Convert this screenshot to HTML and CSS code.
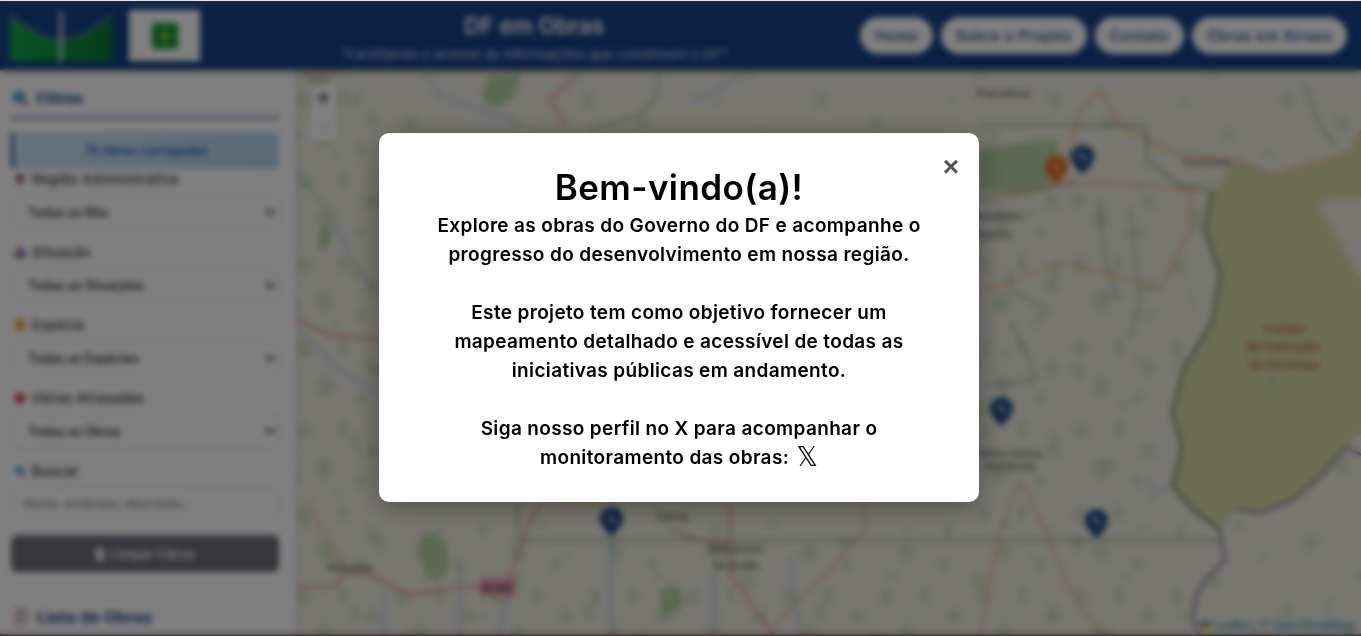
FILE: index.html
```html
<!DOCTYPE html>
<html lang="pt-BR">
<head>
<meta charset="utf-8">
<title>DF em Obras</title>
<link rel="stylesheet" href="styles.css">
</head>
<body>
<div class="page">
  <header class="topbar">
    <div class="logos">
      <svg class="logo-unb" viewBox="0 0 102 50"><defs><linearGradient id="unbg" x1="0" x2="1" y1="0" y2="0"><stop offset="0" stop-color="#12a848"/><stop offset="1" stop-color="#087a2c"/></linearGradient></defs><path d="M0 5 C22 22 36 30 51 30 C66 30 80 22 102 5 V50 H0Z" fill="url(#unbg)"/><rect x="49" y="0" width="4" height="50" fill="#fff" opacity=".7"/><path d="M0 3 C22 21 36 29 51 29 C66 29 80 21 102 3" fill="none" stroke="#fff" stroke-width="1.5" opacity=".45"/></svg>
      <div class="logo-box"><svg class="logo-df" viewBox="0 0 26 26"><rect width="26" height="26" rx="2" fill="#0c9a30"/><path d="M13 4 L15 11 L22 13 L15 15 L13 22 L11 15 L4 13 L11 11Z" fill="#b8c040"/></svg></div>
    </div>
    <div class="brand">
      <h1 class="brand-title">DF em Obras</h1>
      <p class="brand-sub">"Facilitando o acesso às informações que constroem o DF"</p>
    </div>
    <nav class="nav">
      <a class="nav-btn">Home</a>
      <a class="nav-btn">Sobre o Projeto</a>
      <a class="nav-btn">Contato</a>
      <a class="nav-btn">Obras em Atraso</a>
    </nav>
  </header>

  <main class="content">
    <aside class="sidebar">
      <h2 class="side-title"><svg class="ico-lg" viewBox="0 0 16 16"><circle cx="6.500" cy="6.500" r="5" fill="#5bb8e8" stroke="#3a7aa0" stroke-width="1.5"/><path d="M10 10 L15 15" stroke="#b04060" stroke-width="2.4"/></svg>Filtros</h2>
      <div class="info">74 obras carregadas</div>

      <label class="field-label"><svg class="ico" viewBox="0 0 12 12"><path d="M6 1 C8.500 1 10 2.500 10 5 C10 8 6 12 6 12 C6 12 2 8 2 5 C2 2.500 3.500 1 6 1Z" fill="#8a4a62"/></svg>Região Administrativa</label>
      <select class="control"><option>Todas as RAs</option></select>

      <label class="field-label"><svg class="ico" viewBox="0 0 12 12"><rect x="0" y="6" width="3.500" height="6" fill="#4caf50"/><rect x="4" y="0" width="3.500" height="12" fill="#c0508a"/><rect x="8" y="4" width="3.500" height="8" fill="#3a6fd0"/></svg>Situação</label>
      <select class="control"><option>Todas as Situações</option></select>

      <label class="field-label"><svg class="ico" viewBox="0 0 12 12"><rect x="1" y="0" width="10" height="12" fill="#f0c050"/><path d="M3 4 H9 M3 7 H9" stroke="#e06030" stroke-width="1.6"/></svg>Espécie</label>
      <select class="control"><option>Todas as Espécies</option></select>

      <label class="field-label"><svg class="ico" viewBox="0 0 12 12"><circle cx="6" cy="6" r="5.500" fill="#e04060"/></svg>Obras Atrasadas</label>
      <select class="control"><option>Todas as Obras</option></select>

      <label class="field-label"><svg class="ico" viewBox="0 0 12 12"><circle cx="5" cy="5" r="4" fill="#3aa0e0"/><path d="M8 8 L12 12" stroke="#404a90" stroke-width="2"/></svg>Buscar</label>
      <input class="control control-text" type="text" placeholder="Nome, endereço, descrição...">

      <button class="clear-btn"><svg class="ico-trash" viewBox="0 0 10 14"><path d="M0 2 H10 M3 2 V0 H7 V2 M1 3 V14 H9 V3" fill="#ddd" stroke="#eee"/></svg>Limpar Filtros</button>
      <hr class="side-rule">
      <h2 class="side-title side-title-list"><svg class="ico-lg" viewBox="0 0 16 18"><rect x="1" y="2" width="14" height="16" rx="1" fill="#f4e4d8" stroke="#d09080"/><rect x="4" y="0" width="8" height="4" fill="#a0a0b0"/><path d="M4 8 H12 M4 11 H12 M4 14 H12" stroke="#8a90c0"/></svg>Lista de Obras</h2>
    </aside>

    <section class="map">
      <svg class="tiles" viewBox="295 70 1066 564" preserveAspectRatio="none">
        <defs>
          <pattern id="woods" width="233" height="171" patternUnits="userSpaceOnUse">
            <path d="M12 14 q7-5 9 2 q1 9-6 8 q-6-2-3-10Z M70 8 q8-3 9 4 q-1 6-7 4 q-6-3-2-8Z M40 62 q12-5 16 4 q0 14-10 10 q-9-4-6-14Z M96 40 q5-2 6 3 q0 5-5 4 q-4-2-1-7Z M16 100 q4-3 6 1 q0 5-4 5 q-5-2-2-6Z M140 24 q10-6 13 3 q1 8-6 12 q-10-3-7-15Z M190 60 q6-3 7 3 q0 6-6 5 q-4-3-1-8Z M118 92 q6-3 9 2 q4 14-5 16 q-8-6-4-18Z M170 118 q12-4 15 5 q-1 10-11 8 q-7-4-4-13Z M60 130 q7-2 8 4 q0 7-6 6 q-6-3-2-10Z M215 140 q6-3 8 3 q0 6-5 6 q-5-3-3-9Z M100 150 q5-2 6 3 q0 4-4 4 q-4-2-2-7Z M205 15 q5-3 7 2 q0 5-5 5 q-4-3-2-7Z" fill="#bcd8a6"/>
          </pattern>
          <pattern id="dense" width="97" height="83" patternUnits="userSpaceOnUse">
            <path d="M8 10 q8-5 11 3 q2 12-6 12 q-8-4-5-15Z M48 6 q7-2 8 5 q2 10-5 13 q-6-6-3-18Z M76 30 q10-4 12 5 q0 9-9 8 q-7-4-3-13Z M26 46 q10-6 14 3 q3 14-6 16 q-10-4-8-19Z M66 62 q7-3 10 3 q-1 9-8 7 q-5-3-2-10Z" fill="#b0d09a"/>
            <path d="M0 36 Q20 30 34 38 T66 44 T97 38 M40 0 Q36 30 44 50 T50 83" fill="none" stroke="#c4dab6" stroke-width="1.2"/>
          </pattern>
        </defs>
        <rect class="land" x="295" y="70" width="1066" height="564"/>
        <rect x="295" y="70" width="1066" height="564" fill="url(#woods)" opacity=".45"/>
        <path fill="url(#dense)" opacity=".42" d="M980 190 H1200 L1205 260 L1175 370 L1165 530 H980Z M295 70 H380 V634 H295Z M380 545 H1190 V634 H380Z"/>
        <path class="wood" d="M490 75 h30 q-2 25-22 32 q-16-2-16-14Z M305 75 h28 l-8 12 l6 25 q-14 5-12-15Z M980 150 q30-8 78-10 l-1 45 q-30 12-77 6Z M420 535 q24-6 28 15 q4 25-12 32 q-18-8-16-47Z M660 590 q20-12 24 10 q-8 20-24 14Z M320 228 q12-6 12 8 q-4 18-14 12Z"/>
        <path class="olive" d="M1361 132 L1350 153 L1273 175 L1237 160 L1227 170 L1213 193 L1205 230 L1220 273 L1213 320 L1183 370 L1172 413 L1182 447 L1173 487 L1193 510 L1220 530 L1237 510 L1260 513 L1293 500 L1320 477 L1347 447 L1361 433Z"/>
        <path class="white-area" d="M1361 197 L1327 200 L1320 207 L1337 237 L1361 280Z"/>
        <g class="river">
          <path d="M297 170 L320 200 L335 225 L350 255 L380 300 M300 330 L340 370 L380 395 M425 75 L440 95 L480 110 L515 120 L517 133 M690 100 L710 95 L740 75 M384 590 V634 M460 560 V634 M509 595 L498 634 M611 540 V634 M714 570 V634 M790 560 L800 634 M1150 500 L1175 480 M1270 370 L1272 385 M1330 600 L1325 634"/>
        </g>
        <g class="green">
          <path d="M660 72 L655 100 L640 115 L590 130 M1305 85 L1320 125 L1335 145 M980 200 L1045 190 L1075 180 M1010 270 L1010 290 L1050 310 M1010 320 L1030 360 L1035 380 L990 385 M1100 200 L1105 260 L1120 300 M1130 210 L1140 300 L1130 340"/>
        </g>
        <g class="orange">
          <path d="M300 75 L345 70 M308 500 L327 540 L343 560 L343 567 M1060 182 L1080 110 L1100 90 L1120 125 L1180 155 L1237 160 L1273 175 L1350 153 L1361 130 M985 200 L1045 187 L1100 182 L1200 190 M980 292 L1060 262 L1130 280 L1160 290 L1190 230 L1190 190 M1020 480 L1045 530 L1070 590 L1100 634 M1020 480 L1000 530 L980 634 M552 505 L600 503 L630 497 M864 503 L865 530 L826 573 L781 617 L772 634"/>
        </g>
        <g class="trunk">
          <path d="M297 320 L330 335 L380 340 M580 72 L550 100 L565 125 M299 587 L335 587 L344 573 L366 573 L410 595 L460 587 L480 587 M509 580 L530 520 L542 503 M730 503 V573 L772 634 M672 530 L700 540 L730 545"/>
        </g>
        <path class="df-line" d="M518 503 V540 H1220 M980 125 H1145 L1147 160 L1180 185 L1212 190"/>
        <path class="boundary" d="M1212 190 L1205 230 L1220 273 L1213 320 L1183 370 L1172 413 L1182 447 L1173 487 L1193 510 L1220 530"/>
        <path class="border-violet" d="M1220 530 L1225 560 L1205 580 L1195 600 L1192 620 L1200 634 M1237 510 L1260 513 L1293 500 L1320 477 L1347 447 L1361 455"/>
        <g class="place">
          <text x="1003" y="97">Planaltina</text>
          <text x="1207" y="166">Formosa</text>
          <text x="992" y="220">Sobradinho</text>
          <text x="992" y="238">Brasília</text>
          <text x="1010" y="457">Novo Gama</text>
          <text x="1010" y="470">dos Goiás</text>
          <text x="672" y="520">Gama</text>
          <text x="736" y="552">Valparaíso</text>
          <text x="736" y="569">de Goiás</text>
          <text x="350" y="571">Alexânia</text>
        </g>
        <g class="place place-mil">
          <text x="1285" y="333">Campo</text>
          <text x="1283" y="351">de Instrução</text>
          <text x="1284" y="369">de Formosa</text>
        </g>
        <g class="shield"><rect x="480" y="578" width="35" height="19" rx="2"/><text x="497" y="591">BR-060</text></g>
      </svg>

      <div class="zoom-ctl"><span class="zoom-btn">+</span><span class="zoom-btn zoom-off">−</span></div>

      <svg class="pin pin-a" viewBox="0 0 24 30"><path class="pin-blue" d="M12 0 C19 0 24 5 24 12 C24 20 12 30 12 30 C12 30 0 20 0 12 C0 5 5 0 12 0Z"/><path class="pin-mark" d="M8 8 L16 16" /></svg>
      <svg class="pin pin-b" viewBox="0 0 24 30"><path class="pin-orange" d="M12 0 C19 0 24 5 24 12 C24 20 12 30 12 30 C12 30 0 20 0 12 C0 5 5 0 12 0Z"/><circle class="pin-dot" cx="12" cy="11" r="2.500"/></svg>
      <svg class="pin pin-c" viewBox="0 0 24 30"><path class="pin-blue" d="M12 0 C19 0 24 5 24 12 C24 20 12 30 12 30 C12 30 0 20 0 12 C0 5 5 0 12 0Z"/><path class="pin-mark" d="M8 8 L16 16" /></svg>
      <svg class="pin pin-d" viewBox="0 0 24 30"><path class="pin-blue" d="M12 0 C19 0 24 5 24 12 C24 20 12 30 12 30 C12 30 0 20 0 12 C0 5 5 0 12 0Z"/><path class="pin-mark" d="M8 8 L16 16" /></svg>
      <svg class="pin pin-e" viewBox="0 0 24 30"><path class="pin-blue" d="M12 0 C19 0 24 5 24 12 C24 20 12 30 12 30 C12 30 0 20 0 12 C0 5 5 0 12 0Z"/><path class="pin-mark" d="M8 8 L16 16" /></svg>

      <div class="attrib"><svg class="flag" viewBox="0 0 12 8"><rect width="12" height="4" fill="#4C7BE1"/><rect y="4" width="12" height="4" fill="#FFD500"/></svg><a>Leaflet</a> | © <a>OpenStreetMap</a></div>
    </section>
  </main>
  <div class="page-foot"></div>
</div>

<div class="overlay">
  <div class="modal">
    <span class="close">×</span>
    <h2 class="modal-title">Bem-vindo(a)!</h2>
    <p class="modal-text">Explore as obras do Governo do DF e acompanhe o<br>progresso do desenvolvimento em nossa região.</p>
    <p class="modal-text">Este projeto tem como objetivo fornecer um<br>mapeamento detalhado e acessível de todas as<br>iniciativas públicas em andamento.</p>
    <p class="modal-text">Siga nosso perfil no X para acompanhar o<br>monitoramento das obras: <span class="x-mark">𝕏</span></p>
  </div>
</div>
</body>
</html>
```
FILE: styles.css
```css
* { box-sizing: border-box; }
html, body { margin: 0; height: 100%; overflow: hidden; background: #f6e9e6; }
body { font-family: Inter, "Noto Sans", sans-serif; padding-top: 1px; }

.page { height: 635px; display: flex; flex-direction: column; }

.topbar {
  height: 69px; flex: none;
  display: flex; align-items: center; justify-content: space-between;
  background: #144288; padding: 0 14px 0 10px;
  box-shadow: 0 2px 4px rgba(0,0,0,.3);
  position: relative; z-index: 2;
}
.logos { display: flex; align-items: center; gap: 17px; }
.logo-unb { width: 102px; height: 50px; display: block; }
.logo-box { width: 71px; height: 51px; background: #fff; display: flex; align-items: center; justify-content: center; }
.logo-df { width: 26px; height: 26px; }
.brand { text-align: center; color: #fff; margin-left: 8px; padding-top: 4px; }
.brand-title { margin: 0 0 7px; font-size: 22.5px; line-height: 26px; font-weight: 600; }
.brand-sub { margin: 0; font-size: 13.5px; line-height: 16px; letter-spacing: .15px; opacity: .8; }
.nav { display: flex; gap: 8px; }
.nav-btn {
  height: 37px; padding: 0 15px; border-radius: 19px;
  background: #fff; color: #144288; font-size: 14.5px; font-weight: 500; letter-spacing: .6px;
  display: flex; align-items: center;
}

.content { flex: 1; display: flex; min-height: 0; }
.sidebar {
  width: 295px; flex: none; background: #fff; padding: 16px 16px 0 11px;
  box-shadow: 2px 0 6px rgba(0,0,0,.12); position: relative; z-index: 1;
}
.side-title {
  margin: 0; height: 33px; padding-bottom: 6px;
  border-bottom: 3px solid #8e88c0; color: #1c4a8a;
  font-size: 15px; font-weight: 700; display: flex; align-items: center; gap: 8px;
}
.ico-lg { width: 17px; height: 17px; flex: none; margin-left: 1px; }
.info {
  margin: 13px 0 2px; height: 37px; border-left: 3px solid #1c4a8a; border-radius: 4px;
  background: linear-gradient(135deg, #d0e6fa, #b4d4f2);
  color: #1a66c0; font-size: 12.5px; font-weight: 600;
  display: flex; align-items: center; justify-content: center;
}
.field-label {
  height: 16px; margin-bottom: 8px; display: flex; align-items: center; gap: 6px;
  font-size: 13.5px; font-weight: 500; letter-spacing: .3px; color: #333; padding-left: 3px;
}
.ico { width: 12px; height: 12px; flex: none; }
.control {
  display: block; width: 100%; height: 34px; margin-bottom: 15px;
  border: 1px solid #d8d8d8; border-radius: 5px; background: #fff;
  font-family: Inter, sans-serif; font-size: 12.5px; font-weight: 500; color: #222; padding: 0 12px;
}
.control-text { height: 32px; margin-bottom: 16px; font-size: 12px; font-weight: 400; }
.clear-btn {
  width: 100%; height: 37px; border: 0; border-radius: 6px; background: #6a7279;
  color: #fff; font-family: Inter, sans-serif; font-size: 13px; font-weight: 500;
  display: flex; align-items: center; justify-content: center; gap: 6px;
}
.ico-trash { width: 10px; height: 14px; }
.side-rule { margin: 15px -16px 0 -11px; border: 0; border-top: 1px solid #e6e6e6; }
.side-title-list { border: 0; margin-top: 15px; padding: 0; height: 28px; font-size: 16.5px; }

.map { flex: 1; position: relative; overflow: hidden; background: #f0eee0; }
.tiles { position: absolute; inset: 0; width: 100%; height: 100%; }
.land { fill: #f0eee0; }
.wood { fill: #b8d4a4; }
.olive { fill: #d8dca8; }
.white-area { fill: #f0eee2; }
.river { fill: none; stroke: #a8cade; stroke-width: 2; }
.green { fill: none; stroke: #9cc288; stroke-width: 2; }
.orange { fill: none; stroke: #eeb684; stroke-width: 2; }
.trunk { fill: none; stroke: #e8908e; stroke-width: 2.2; }
.df-line { fill: none; stroke: #94aa84; stroke-width: 2; }
.boundary { fill: none; stroke: #6a7e5e; stroke-width: 2.5; }
.border-violet { fill: none; stroke: #8a7aa0; stroke-width: 2.5; }
.place text { font-family: "Noto Sans", sans-serif; font-size: 11.5px; fill: #444; text-anchor: middle; }
.place-mil text { fill: #c0392b; font-size: 12.5px; }
.shield rect { fill: #f2a0b0; }
.shield text { font-family: "Noto Sans", sans-serif; font-size: 9px; fill: #444; text-anchor: middle; font-weight: 700; }

.zoom-ctl {
  position: absolute; left: 15px; top: 14px; width: 27px; height: 56px;
  background: #fff; border-radius: 3px; display: flex; flex-direction: column;
  box-shadow: 0 0 0 1px rgba(0,0,0,.05);
}
.zoom-btn { height: 28px; text-align: center; font: 700 20px/28px "Liberation Sans", sans-serif; color: #222; }
.zoom-off { color: #bbb; }

.pin { position: absolute; width: 23px; height: 29px; }
.pin-blue { fill: #1d4a86; }
.pin-orange { fill: #e8742c; }
.pin-mark { stroke: #d8e2ee; stroke-width: 3; }
.pin-dot { fill: #f6d8c0; }
.pin-a { left: 776px; top: 75px; }
.pin-b { left: 750px; top: 85px; }
.pin-c { left: 695px; top: 327px; }
.pin-d { left: 790px; top: 439px; }
.pin-e { left: 305px; top: 437px; }

.attrib {
  position: absolute; right: 3px; bottom: 2px; font: 12px/14px "Liberation Sans", sans-serif;
  color: #444; padding: 0 2px; background: rgba(255,255,255,.5); display: flex; align-items: center; gap: 3px;
}
.attrib a { color: #0078a8; }
.flag { width: 12px; height: 8px; }

.page-foot { height: 2px; flex: none; background: #68585a; }

.overlay {
  position: fixed; inset: 1px 0 0 0; background: rgba(0,0,0,.5);
  backdrop-filter: blur(3px); z-index: 10;
  display: flex; align-items: flex-start; justify-content: center;
  padding-top: 132px; padding-right: 3px;
}
.modal {
  position: relative; width: 600px; height: 369px; background: #fff; border-radius: 10px;
  padding: 32px 20px 0; text-align: center; color: #000;
  box-shadow: 0 5px 28px rgba(0,0,0,.35);
}
.close {
  position: absolute; right: 20px; top: 18px; font: 700 28px/32px "Liberation Sans", sans-serif; color: #555;
}
.modal-title { margin: 0 0 2px; font-size: 35px; line-height: 44px; font-weight: 600; letter-spacing: .4px; }
.modal-text { margin: 0 0 29px; font-size: 19px; line-height: 29px; font-weight: 600; letter-spacing: .35px; }
.x-mark { font-family: "DejaVu Sans", sans-serif; font-size: 27px; font-weight: 400; line-height: 20px; letter-spacing: 0; vertical-align: -2px; margin-left: 2px; }
```
